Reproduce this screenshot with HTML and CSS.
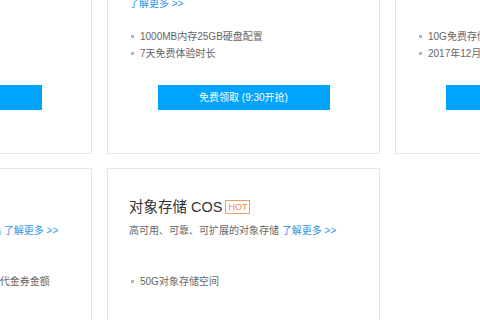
FILE: index.html
```html
<!DOCTYPE html>
<html lang="zh-CN">
<head>
<meta charset="utf-8">
<title>免费体验</title>
<link rel="stylesheet" href="styles.css">
</head>
<body>
<div class="grid">
  <div class="card">
    <div class="title">云服务器 CVM</div>
    <p class="desc">安全稳定、弹性扩展的云服务器 <a class="more" href="#">了解更多 &gt;&gt;</a></p>
    <ul class="list">
      <li>1核1G内存20GB硬盘配置</li>
      <li>15天免费体验时长</li>
    </ul>
    <a class="btn" href="#">免费领取 (9:30开抢)</a>
  </div>
  <div class="card">
    <div class="title">云服务器 CVM</div>
    <p class="desc">高性能、高可靠的云端计算服务，按需使用<br><a class="more" href="#">了解更多 &gt;&gt;</a></p>
    <ul class="list">
      <li>1000MB内存25GB硬盘配置</li>
      <li>7天免费体验时长</li>
    </ul>
    <a class="btn" href="#">免费领取 (9:30开抢)</a>
  </div>
  <div class="card">
    <div class="title">云存储 CBS</div>
    <p class="desc">高可用、低成本的云存储服务 <a class="more" href="#">了解更多 &gt;&gt;</a></p>
    <ul class="list">
      <li>10G免费存储空间</li>
      <li>2017年12月31日前有效</li>
    </ul>
    <a class="btn" href="#">免费领取</a>
  </div>
  <div class="card">
    <div class="title">云数据库 CDB</div>
    <p class="desc">安全稳定、弹性扩展的云服务器产品 <a class="more" href="#">了解更多 &gt;&gt;</a></p>
    <ul class="list">
      <li>新用户注册即可领取最高10000元代金券金额</li>
    </ul>
    <a class="btn" href="#">免费领取</a>
  </div>
  <div class="card">
    <div class="title">对象存储 COS<span class="hot">HOT</span></div>
    <p class="desc">高可用、可靠、可扩展的对象存储 <a class="more" href="#">了解更多 &gt;&gt;</a></p>
    <ul class="list">
      <li>50G对象存储空间</li>
    </ul>
    <a class="btn" href="#">免费领取</a>
  </div>
</div>
</body>
</html>
```

FILE: styles.css
```css
html, body {
  margin: 0;
  padding: 0;
  background: #fff;
  overflow: hidden;
}
body {
  width: 480px;
  height: 320px;
  font-family: "Liberation Sans", "Noto Sans CJK SC", sans-serif;
  color: #666;
}
.grid {
  display: grid;
  grid-template-columns: repeat(3, 273px);
  column-gap: 15px;
  row-gap: 14px;
  margin: -77px 0 0 -181px;
}
.card {
  border: 1px solid #e6e6e6;
  padding: 26px 21px 43px;
  background: #fff;
}
.title {
  font-size: 14.5px;
  line-height: 24px;
  color: #333;
  display: flex;
  align-items: center;
  white-space: nowrap;
}
.hot {
  margin-left: 3px;
  border: 1px solid #f39a62;
  color: #f08a4b;
  font-size: 9px;
  line-height: 12px;
  padding: 0 2px;
}
.desc {
  margin: 3px 0 0;
  height: 36px;
  font-size: 10px;
  line-height: 18px;
  color: #666;
  white-space: nowrap;
}
.more {
  color: #2d94e6;
  text-decoration: none;
}
.list {
  margin: 15px 0 0;
  padding: 0;
  list-style: none;
  height: 34px;
}
.list li {
  display: flex;
  align-items: center;
  font-size: 10px;
  line-height: 17px;
  color: #666;
  white-space: nowrap;
}
.list li::before {
  content: "";
  width: 3px;
  height: 3px;
  margin: 0 6px 0 2px;
  background: #b5b5b5;
  flex: none;
}
.btn {
  display: block;
  width: 172px;
  height: 25px;
  margin: 23px auto 0;
  background: #00a4ff;
  color: #fff;
  font-size: 10px;
  line-height: 25px;
  text-align: center;
  text-decoration: none;
}
```
